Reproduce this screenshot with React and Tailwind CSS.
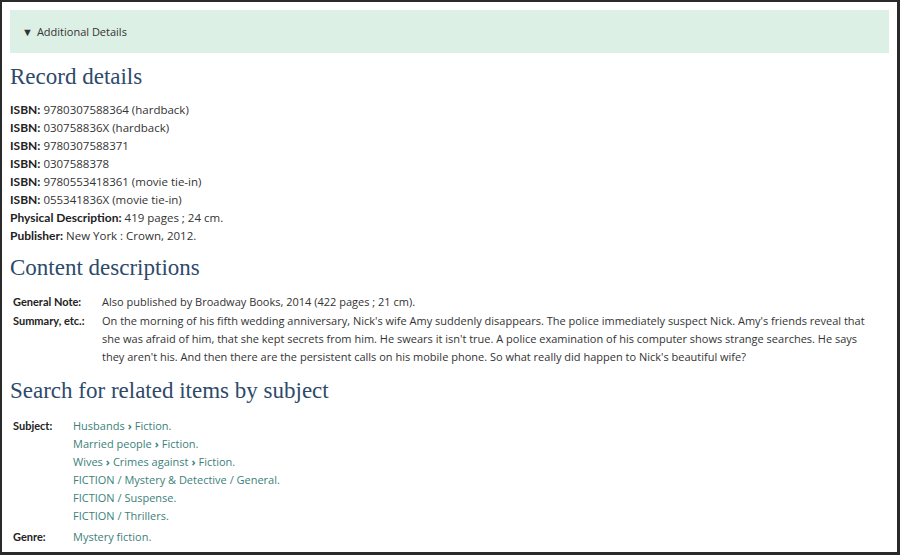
import React from "react";

const isbns = [
  ["9780307588364", "(hardback)"],
  ["030758836X", "(hardback)"],
  ["9780307588371", ""],
  ["0307588378", ""],
  ["9780553418361", "(movie tie-in)"],
  ["055341836X", "(movie tie-in)"],
];

const subjects = [
  ["Husbands", "Fiction."],
  ["Married people", "Fiction."],
  ["Wives", "Crimes against", "Fiction."],
  ["FICTION / Mystery & Detective / General."],
  ["FICTION / Suspense."],
  ["FICTION / Thrillers."],
];

function Heading({ children }) {
  return (
    <h2 className="font-['Liberation_Serif',serif] text-[23px] leading-[28px] text-[#2d4a6b]">
      {children}
    </h2>
  );
}

function Label({ children, width }) {
  return (
    <div className={`shrink-0 pl-[3px] font-['Lato',sans-serif] font-bold text-[11px] text-[#222] whitespace-nowrap ${width}`}>
      {children}
    </div>
  );
}

function Key({ children }) {
  return <b className="font-['Lato',sans-serif] font-bold text-[12px] text-[#222]">{children}</b>;
}

export default function App() {
  return (
    <div className="w-[900px] h-[555px] bg-white border-l-2 border-t-2 border-r-[3px] border-b-[3px] border-[#2a2a2a] font-['Open_Sans',sans-serif] text-[11px] text-[#333] overflow-hidden">
      <div className="px-2 pt-2">
        <div className="bg-[#ddf0e6] h-[43px] flex items-center pl-[12px] pt-[2px] text-[11px] text-[#333]">
          <span className="text-[11px] mr-[4px]">▼</span>Additional Details
        </div>

        <div className="mt-[10px]">
          <Heading>Record details</Heading>
          <ul className="mt-[10px] leading-[18px] text-[11.5px]">
            {isbns.map(([num, note]) => (
              <li key={num}>
                <Key>ISBN:</Key> {num}
                {note ? ` ${note}` : ""}
              </li>
            ))}
            <li>
              <Key>Physical Description:</Key> 419 pages ; 24 cm.
            </li>
            <li>
              <Key>Publisher:</Key> New York : Crown, 2012.
            </li>
          </ul>
        </div>

        <div className="mt-[9px]">
          <Heading>Content descriptions</Heading>
          <div className="mt-[11px] leading-[18px] flex flex-col gap-[1px]">
            <div className="flex">
              <Label width="w-[92px]">General Note:</Label>
              <div>Also published by Broadway Books, 2014 (422 pages ; 21 cm).</div>
            </div>
            <div className="flex">
              <Label width="w-[92px]">Summary, etc.:</Label>
              <div className="pr-[15px]">
                On the morning of his fifth wedding anniversary, Nick's wife Amy suddenly disappears. The police immediately suspect Nick. Amy's friends reveal that she was afraid of him, that she kept secrets from him. He swears it isn't true. A police examination of his computer shows strange searches. He says they aren't his. And then there are the persistent calls on his mobile phone. So what really did happen to Nick's beautiful wife?
              </div>
            </div>
          </div>
        </div>

        <div className="mt-[11px]">
          <Heading>Search for related items by subject</Heading>
          <div className="mt-[12px] leading-[18px] flex flex-col gap-[3px]">
            <div className="flex">
              <Label width="w-[63px]">Subject:</Label>
              <div>
                {subjects.map((parts, i) => (
                  <div key={i} className="text-[#3d7f7a]">
                    {parts.map((p, j) => (
                      <React.Fragment key={j}>
                        {j > 0 && <span className="text-[11px] font-bold px-[3px]">›</span>}
                        <a href="#" className="hover:underline">{p}</a>
                      </React.Fragment>
                    ))}
                  </div>
                ))}
              </div>
            </div>
            <div className="flex">
              <Label width="w-[63px]">Genre:</Label>
              <div className="text-[#3d7f7a]">
                <a href="#" className="hover:underline">Mystery fiction.</a>
              </div>
            </div>
          </div>
        </div>
      </div>
    </div>
  );
}
